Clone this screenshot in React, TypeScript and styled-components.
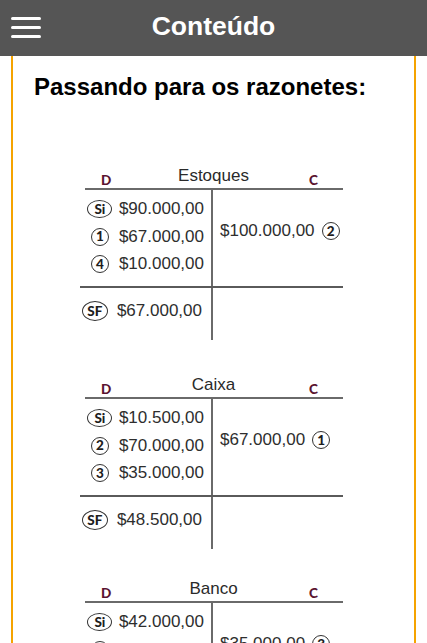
import React from "react";
import styled, { createGlobalStyle } from "styled-components";

const GlobalStyle = createGlobalStyle`
  html, body {
    margin: 0;
    padding: 0;
    background: #ffffff;
    font-family: "Liberation Sans", Arial, sans-serif;
  }
  * { box-sizing: border-box; }
`;

const Page = styled.div`
  height: 100vh;
  overflow: hidden;
  display: flex;
  flex-direction: column;
`;

const Header = styled.header`
  height: 56px;
  flex: none;
  background: #555555;
  display: grid;
  grid-template-columns: 1fr auto 1fr;
  align-items: center;
`;

const MenuButton = styled.div`
  justify-self: start;
  margin-left: 11px;
  display: flex;
  flex-direction: column;
  gap: 6px;
  padding-bottom: 1px;
`;

const MenuBar = styled.span`
  display: block;
  width: 30px;
  height: 3px;
  border-radius: 1.5px;
  background: #ffffff;
`;

const Title = styled.h1`
  margin: 0;
  padding-bottom: 3px;
  color: #ffffff;
  font-size: 26.5px;
  font-weight: bold;
  line-height: 1.15;
`;

const Content = styled.main`
  flex: 1;
  margin: 0 11px;
  border-left: 2px solid #f5a300;
  border-right: 2px solid #f5a300;
  padding: 17px 0 0 21px;
`;

const Heading = styled.h2`
  margin: 0;
  font-size: 24px;
  font-weight: bold;
  line-height: 1.15;
  color: #000000;
`;

const Accounts = styled.div`
  display: flex;
  flex-direction: column;
  margin-left: 46px;
  margin-top: 66px;
`;

const Account = styled.section<{ $gap: number }>`
  width: 263px;
  margin-top: ${(p) => p.$gap}px;
  color: #2e2e2e;
`;

const AccountHead = styled.div`
  height: 21px;
  display: flex;
  align-items: flex-end;
`;

const SideLabel = styled.span<{ $side: "D" | "C" }>`
  width: ${(p) => (p.$side === "D" ? 28 : 20)}px;
  margin-left: ${(p) => (p.$side === "D" ? 21 : 0)}px;
  margin-right: ${(p) => (p.$side === "C" ? 25 : 0)}px;
  text-align: ${(p) => (p.$side === "D" ? "left" : "right")};
  padding-bottom: 2px;
  font-family: Lato, "Open Sans", sans-serif;
  font-weight: 900;
  font-size: 13.5px;
  line-height: 12px;
  color: #5a1430;
`;

const AccountName = styled.span`
  flex: 1;
  text-align: center;
  padding-bottom: 4px;
  font-size: 17px;
  line-height: 17px;
  color: #2a2a2a;
`;

const TopRule = styled.div`
  height: 2px;
  margin-left: 5px;
  background: #6a6a6a;
`;

const MidRule = styled.div`
  height: 2px;
  background: #5a5a5a;
`;

const Section = styled.div<{ $height: number }>`
  height: ${(p) => p.$height}px;
  display: grid;
  grid-template-columns: 131px 2px 1fr;
`;

const Divider = styled.div`
  background: #6a6a6a;
`;

const LeftCol = styled.div<{ $top: number; $right: number }>`
  display: flex;
  flex-direction: column;
  align-items: flex-end;
  padding-top: ${(p) => p.$top}px;
  padding-right: ${(p) => p.$right}px;
`;

const RightCol = styled.div`
  display: flex;
  flex-direction: column;
  align-items: flex-start;
  padding-top: 28px;
  padding-left: 7px;
`;

const Entry = styled.div<{ $gap: number }>`
  height: 27.5px;
  display: flex;
  align-items: center;
  gap: ${(p) => p.$gap}px;
`;

const Amount = styled.span`
  font-size: 17px;
  line-height: 20px;
  color: #2e2e2e;
  white-space: nowrap;
`;

const BadgeSlot = styled.span`
  width: 26px;
  display: flex;
  justify-content: center;
`;

const Badge = styled.span<{ $w: number; $h: number }>`
  width: ${(p) => p.$w}px;
  height: ${(p) => p.$h}px;
  border: 1.5px solid #333333;
  border-radius: 50%;
  display: flex;
  align-items: center;
  justify-content: center;
  font-family: Lato, "Open Sans", sans-serif;
  font-weight: 900;
  font-size: 13.5px;
  line-height: 1;
  color: #1e1e1e;
`;

type Mark = string;

function Tag({ mark }: { mark: Mark }) {
  if (mark === "Si") return <Badge $w={25} $h={18}>Si</Badge>;
  if (mark === "SF") return <Badge $w={26} $h={20}>SF</Badge>;
  return <Badge $w={18} $h={18}>{mark}</Badge>;
}

type AccountData = {
  name: string;
  gap: number;
  debits: { mark: Mark; value: string }[];
  credits: { mark: Mark; value: string }[];
  balance: string;
};

const accounts: AccountData[] = [
  {
    name: "Estoques",
    gap: 0,
    debits: [
      { mark: "Si", value: "$90.000,00" },
      { mark: "1", value: "$67.000,00" },
      { mark: "4", value: "$10.000,00" },
    ],
    credits: [{ mark: "2", value: "$100.000,00" }],
    balance: "$67.000,00",
  },
  {
    name: "Caixa",
    gap: 36,
    debits: [
      { mark: "Si", value: "$10.500,00" },
      { mark: "2", value: "$70.000,00" },
      { mark: "3", value: "$35.000,00" },
    ],
    credits: [{ mark: "1", value: "$67.000,00" }],
    balance: "$48.500,00",
  },
  {
    name: "Banco",
    gap: 31,
    debits: [
      { mark: "Si", value: "$42.000,00" },
      { mark: "2", value: "$30.000,00" },
    ],
    credits: [{ mark: "3", value: "$35.000,00" }],
    balance: "$37.000,00",
  },
];

function TAccount({ data }: { data: AccountData }) {
  return (
    <Account $gap={data.gap}>
      <AccountHead>
        <SideLabel $side="D">D</SideLabel>
        <AccountName>{data.name}</AccountName>
        <SideLabel $side="C">C</SideLabel>
      </AccountHead>
      <TopRule />
      <Section $height={96}>
        <LeftCol $top={6} $right={7}>
          {data.debits.map((d, i) => (
            <Entry key={i} $gap={6}>
              <BadgeSlot>
                <Tag mark={d.mark} />
              </BadgeSlot>
              <Amount>{d.value}</Amount>
            </Entry>
          ))}
        </LeftCol>
        <Divider />
        <RightCol>
          {data.credits.map((c, i) => (
            <Entry key={i} $gap={7}>
              <Amount>{c.value}</Amount>
              <Tag mark={c.mark} />
            </Entry>
          ))}
        </RightCol>
      </Section>
      <MidRule />
      <Section $height={52}>
        <LeftCol $top={10} $right={9}>
          <Entry $gap={9}>
            <Tag mark="SF" />
            <Amount>{data.balance}</Amount>
          </Entry>
        </LeftCol>
        <Divider />
        <div />
      </Section>
    </Account>
  );
}

export default function App() {
  return (
    <>
      <GlobalStyle />
      <Page>
        <Header>
          <MenuButton>
            <MenuBar />
            <MenuBar />
            <MenuBar />
          </MenuButton>
          <Title>Conteúdo</Title>
          <span />
        </Header>
        <Content>
          <Heading>Passando para os razonetes:</Heading>
          <Accounts>
            {accounts.map((a) => (
              <TAccount key={a.name} data={a} />
            ))}
          </Accounts>
        </Content>
      </Page>
    </>
  );
}
